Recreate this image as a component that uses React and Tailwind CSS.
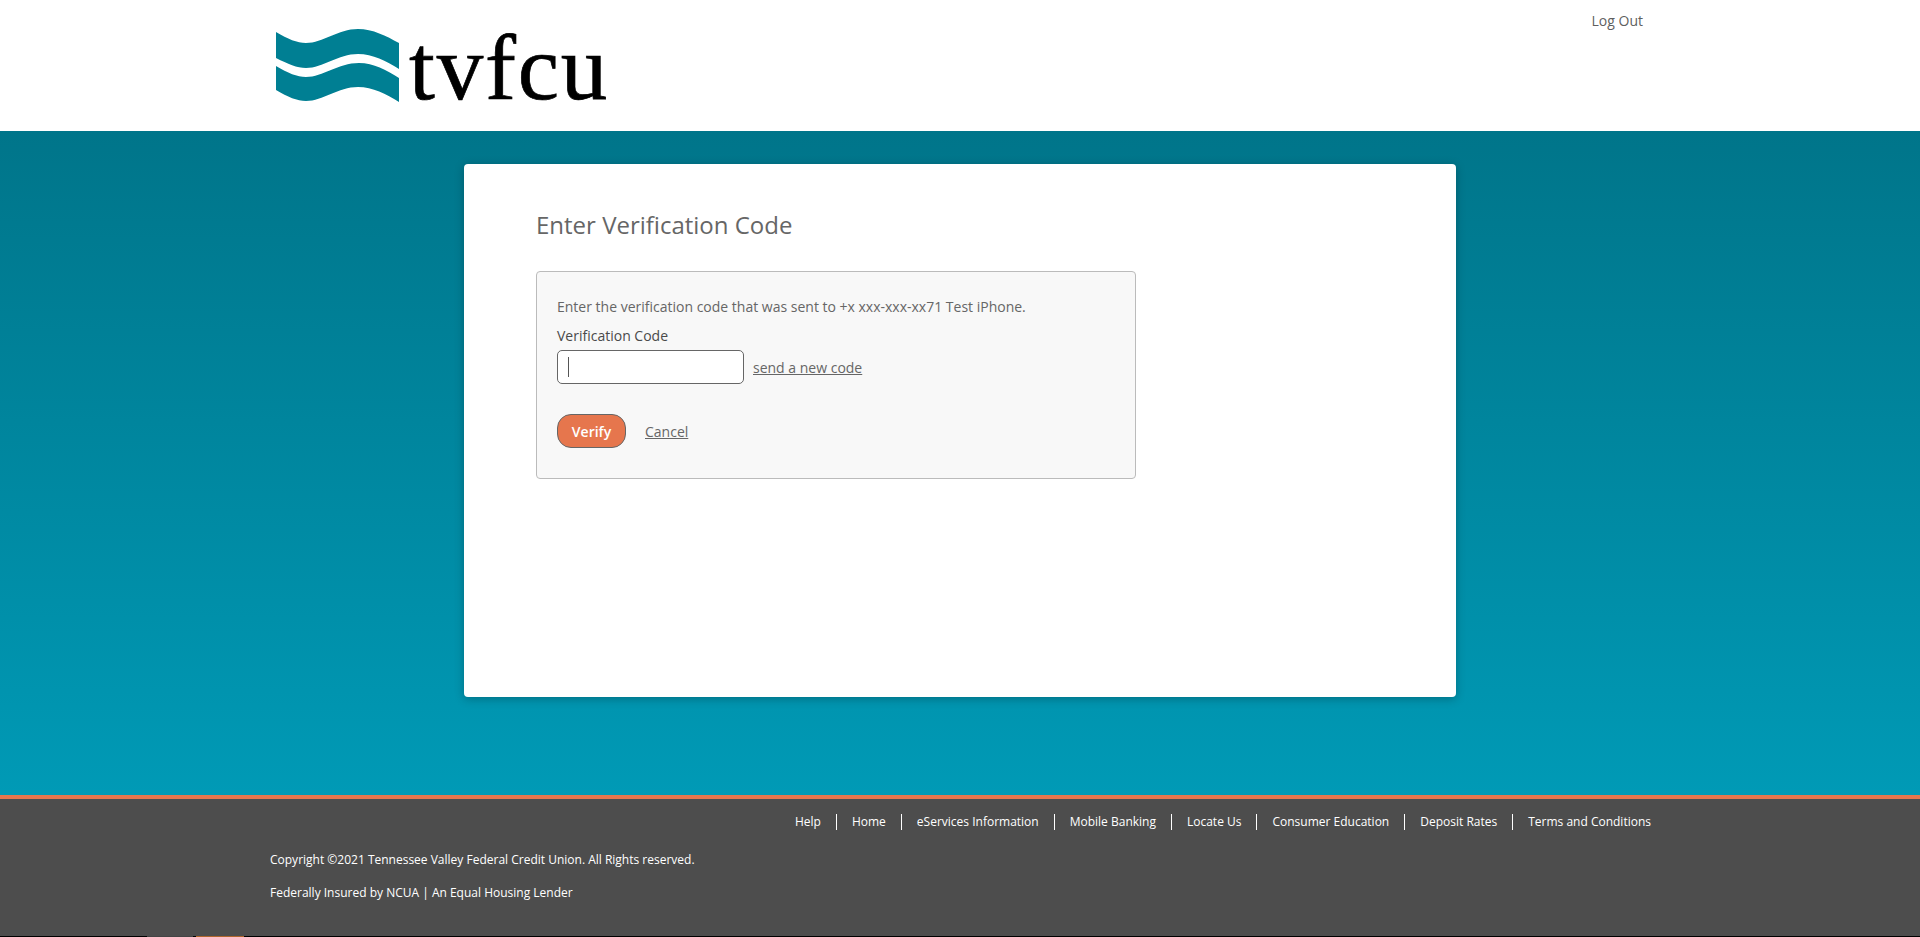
const navLinks = [
  "Help",
  "Home",
  "eServices Information",
  "Mobile Banking",
  "Locate Us",
  "Consumer Education",
  "Deposit Rates",
  "Terms and Conditions",
];

const Waves = () => (
  <svg width="124" height="74" viewBox="275 29 124 74" className="shrink-0">
    <path
      d="M275 32 C287 39 296 43 305 43 C322 43 337 29 357 29 C372 29 385 36 398 43 L398 69 C385 61 372 54 357 54 C337 54 322 68 305 68 C296 68 287 64 275 58 Z"
      fill="#007f93"
    />
    <path
      d="M275 66 C287 73 296 77 305 77 C322 77 337 63 358 63 C373 63 385 70 398 78 L398 102 C385 94 372 87 357 87 C337 87 322 101 305 101 C296 101 287 97 275 90 Z"
      fill="#007f93"
    />
  </svg>
);

export default function App() {
  return (
    <div className="flex h-screen flex-col overflow-hidden bg-white font-['Open_Sans',sans-serif] text-[14px] text-[#666666]">
      {/* HEADER */}
      <header className="h-[131px] shrink-0 bg-white">
        <div className="mx-auto flex w-[1380px] items-start justify-between pl-[6px] pr-[7px]">
          <div className="flex items-start pt-[29px]">
            <Waves />
            <span className="ml-[9px] mt-[-14px] font-['Liberation_Serif',serif] text-[93px] leading-[106px] tracking-[1.8px] text-black [-webkit-text-stroke:0.7px_black]">
              tvfcu
            </span>
          </div>
          <a className="mt-[11px] text-[14px] leading-[20px] text-[#5f5f5f]">Log Out</a>
        </div>
      </header>

      {/* MAIN */}
      <main className="flex h-[664px] shrink-0 justify-center bg-gradient-to-b from-[#00758a] to-[#009ab6] pt-[33px]">
        <div className="h-[533px] w-[992px] rounded-[4px] bg-white pl-[72px] pt-[45px] shadow-[0_2px_10px_rgba(0,0,0,0.25)]">
          <h1 className="text-[24px] font-normal leading-[32px] text-[#666666]">
            Enter Verification Code
          </h1>

          <div className="mt-[30px] h-[208px] w-[600px] rounded-[4px] border border-[#bbbbbb] bg-[#f8f8f8] pl-[20px] pt-[25px]">
            <p className="leading-[20px]">
              Enter the verification code that was sent to +x xxx-xxx-xx71 Test iPhone.
            </p>
            <label className="mt-[9px] block leading-[20px] text-[#4a4a4a]">
              Verification Code
            </label>

            <div className="mt-[4px] flex items-center">
              <div className="relative">
                <input className="block h-[34px] w-[187px] rounded-[5px] border border-[#666666] bg-white outline-none" />
                <span className="absolute left-[11px] top-[7px] h-[20px] w-px bg-[#555555]" />
              </div>
              <a className="ml-[9px] underline">send a new code</a>
            </div>

            <div className="mt-[30px] flex items-center">
              <button className="h-[34px] w-[69px] rounded-[14px] border border-[#666666] bg-[#e6764d] font-semibold text-white">
                Verify
              </button>
              <a className="ml-[19px] underline">Cancel</a>
            </div>
          </div>
        </div>
      </main>

      {/* FOOTER */}
      <footer className="h-[142px] shrink-0 border-t-4 border-[#e6764d] bg-[#4d4d4d] text-[12px] text-white">
        <div className="mx-auto flex h-[137px] w-[1380px] flex-col">
          <nav className="mr-[-1px] mt-[15px] flex justify-end">
            {navLinks.map((link, i) => (
              <a
                key={link}
                className={`px-[15px] leading-[16px] last:pr-0 ${i > 0 ? "border-l border-white" : ""}`}
              >
                {link}
              </a>
            ))}
          </nav>
          <p className="mt-[21px] leading-[18px]">
            Copyright ©2021 Tennessee Valley Federal Credit Union. All Rights reserved.
          </p>
          <p className="mt-[15px] leading-[18px]">
            Federally Insured by NCUA | An Equal Housing Lender
          </p>
        </div>
        <div className="flex h-px bg-black">
          <div className="ml-[147px] w-[46px] bg-[#444444]" />
          <div className="ml-[3px] w-[48px] bg-[#b0662c]" />
        </div>
      </footer>
    </div>
  );
}
